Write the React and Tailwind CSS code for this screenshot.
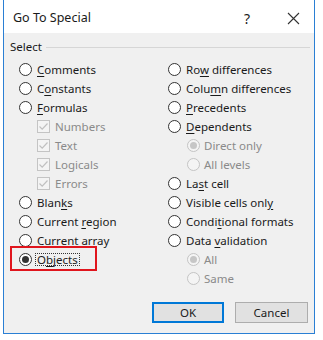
const LEFT = [
  { pre: "", key: "C", post: "omments", type: "radio" },
  { pre: "C", key: "o", post: "nstants", type: "radio" },
  { pre: "", key: "F", post: "ormulas", type: "radio" },
  { label: "Numbers", type: "check" },
  { label: "Text", type: "check" },
  { label: "Logicals", type: "check" },
  { label: "Errors", type: "check" },
  { pre: "Blan", key: "k", post: "s", type: "radio" },
  { pre: "Current ", key: "r", post: "egion", type: "radio" },
  { pre: "Current ", key: "a", post: "rray", type: "radio" },
  { pre: "O", key: "b", post: "jects", type: "radio", selected: true },
];

const RIGHT = [
  { pre: "Ro", key: "w", post: " differences", type: "radio" },
  { pre: "Colu", key: "m", post: "n differences", type: "radio" },
  { pre: "", key: "P", post: "recedents", type: "radio" },
  { pre: "", key: "D", post: "ependents", type: "radio" },
  { label: "Direct only", type: "subradio", selected: true },
  { label: "All levels", type: "subradio" },
  { pre: "La", key: "s", post: "t cell", type: "radio" },
  { pre: "Visible cells onl", key: "y", post: "", type: "radio" },
  { pre: "Condi", key: "t", post: "ional formats", type: "radio" },
  { pre: "Data ", key: "v", post: "alidation", type: "radio" },
  { label: "All", type: "subradio", selected: true },
  { label: "Same", type: "subradio" },
];

function Radio({ selected, disabled }) {
  return (
    <span
      className={
        "w-[13px] h-[13px] rounded-full border flex items-center justify-center shrink-0 " +
        (disabled ? "border-[#c4c4c4] bg-[#f4f4f4]" : "border-[#333333] bg-white")
      }
    >
      {selected && (
        <span className={"w-[7px] h-[7px] rounded-full " + (disabled ? "bg-[#c6c6c6]" : "bg-[#333333]")} />
      )}
    </span>
  );
}

function Check() {
  return (
    <span className="w-[13px] h-[13px] border border-[#c4c4c4] bg-[#f4f4f4] flex items-center justify-center shrink-0">
      <svg width="11" height="11" viewBox="0 0 11 11">
        <path d="M1.5 5.5 L4.2 8.2 L9.5 2.5" fill="none" stroke="#c0c0c0" strokeWidth="1.2" />
      </svg>
    </span>
  );
}

function Row({ item }) {
  if (item.type === "check") {
    return (
      <div className="h-[19px] flex items-center gap-[5px] pl-[18px] text-[#8a8a8a]">
        <Check />
        <span>{item.label}</span>
      </div>
    );
  }
  if (item.type === "subradio") {
    return (
      <div className="h-[19px] flex items-center gap-[4px] pl-[19px] text-[#8a8a8a]">
        <Radio selected={item.selected} disabled />
        <span>{item.label}</span>
      </div>
    );
  }
  const text = (
    <span className={item.selected ? "outline outline-1 outline-dotted outline-[#333] px-[1px] -mx-[1px]" : ""}>
      {item.pre}
      <span className="underline underline-offset-2">{item.key}</span>
      {item.post}
    </span>
  );
  return (
    <div className="relative h-[19px] flex items-center gap-[5px] text-[#1a1a1a]">
      <Radio selected={item.selected} />
      {text}
      {item.selected && (
        <div className="absolute left-[-9px] top-[-4px] w-[87px] h-[25px] border-2 border-[#e0151d]" />
      )}
    </div>
  );
}

export default function App() {
  return (
    <div
      className="w-[323px] h-[340px] bg-white text-[11.5px] leading-none"
      style={{ fontFamily: '"Noto Sans", "Open Sans", sans-serif' }}
    >
      <div className="ml-[3px] w-[312px] h-[334px] border-x border-b border-[#2a7fd4] flex flex-col">
        <div className="h-[33px] bg-white flex items-center pt-[4px] pl-[9px] pr-[14px] text-[12.5px] text-[#1a1a1a]">
          <span>Go To Special</span>
          <span className="ml-auto mr-[37px] text-[14px]">?</span>
          <svg width="13" height="13" viewBox="0 0 13 13">
            <path d="M1 1 L12 12 M12 1 L1 12" stroke="#333" strokeWidth="1.1" />
          </svg>
        </div>
        <div className="flex-1 bg-[#f0f0f0] flex flex-col">
          <div className="mt-[7px] h-[14px] flex items-center pl-[6px] pr-[4px] gap-[4px] text-[#1a1a1a]">
            <span>Select</span>
            <div className="flex-1 h-px bg-[#d6d6d6]" />
          </div>
          <div className="mt-[6px] flex pl-[15px]">
            <div className="w-[149px] flex flex-col">
              {LEFT.map((item, i) => (
                <Row key={i} item={item} />
              ))}
            </div>
            <div className="flex flex-col">
              {RIGHT.map((item, i) => (
                <Row key={i} item={item} />
              ))}
            </div>
          </div>
          <div className="mt-auto mb-[10px] flex justify-end pr-[6px] gap-[11px]">
            <button className="w-[72px] h-[21px] border-2 border-[#0078d7] bg-[#e1e1e1] text-[#1a1a1a]">OK</button>
            <button className="w-[73px] h-[21px] border border-[#adadad] bg-[#e1e1e1] text-[#1a1a1a]">Cancel</button>
          </div>
        </div>
      </div>
    </div>
  );
}
